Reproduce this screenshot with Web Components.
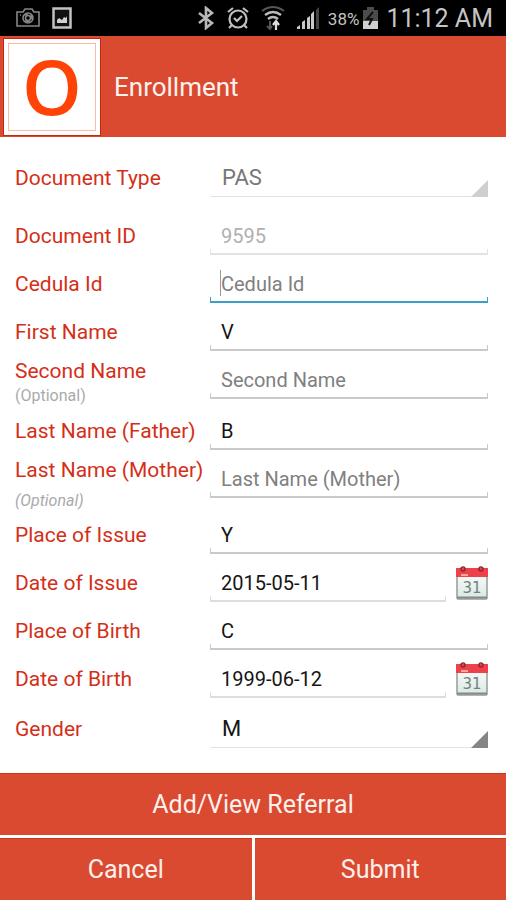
<!DOCTYPE html>
<html lang="en">
<head>
<meta charset="utf-8">
<meta name="viewport" content="width=device-width, initial-scale=1">
<title>Enrollment</title>
<style>
  body { margin: 0; background: #fff; font-family: Roboto, "Liberation Sans", sans-serif;
    --brand: #d94a31; --label: #d42f18; }
</style>
</head>
<body>
<enrollment-screen></enrollment-screen>

<script>
const attach = (host, html) => {
  const t = document.createElement('template');
  t.innerHTML = html;
  host.attachShadow({ mode: 'open' }).append(t.content.cloneNode(true));
};

customElements.define('status-bar', class extends HTMLElement {
  constructor() {
    super();
    attach(this, `
<style>
  :host { display: flex; align-items: center; justify-content: space-between; height: 36px; padding: 0 13px 0 16px; background: #000; color: #c4c4c4; box-sizing: border-box; }
  div { display: flex; align-items: center; }
  svg { display: block; flex: none; }
  .left { gap: 12px; }
  .right { gap: 8px; }
  .radios { gap: 12px; }
  .power { gap: 4px; }
  .pct { font-size: 17px; line-height: 20px; padding-top: 2px; }
  .time { font-size: 25px; line-height: 28px; padding-top: 2px; }
</style>
<div class="left">
  <svg width="24" height="20" viewBox="0 0 24 20" fill="none" stroke="#858585" stroke-width="1.6">
    <path d="M1 4h6l2-3h7l2 3h5v14H1z"/><circle cx="12" cy="10" r="5"/><circle cx="12" cy="10" r="2.5"/><path d="M8 7l4-1M15 6l1 5M14 14l-5-1M4 7h1"/>
  </svg>
  <svg width="20" height="22" viewBox="0 0 20 22"><path d="M1.5 1.5h17v19h-17z" fill="#111" stroke="#c2c2c2" stroke-width="2.5"/><path d="M5 16v-3l2-2 3 2 2-3 2 1 1-2v7z" fill="#d0d0d0"/></svg>
</div>
<div class="right">
  <div class="radios">
  <svg width="18" height="24" viewBox="0 0 18 24" fill="none" stroke="#b8b8b8" stroke-width="2.6"><path d="M2 7l13 10-6 5V2l6 5L2 17"/></svg>
  <svg width="22" height="24" viewBox="0 0 22 24" fill="none" stroke="#c0c0c0" stroke-width="2.2"><circle cx="11" cy="13" r="8.5"/><path d="M7 12l3 3 5-5M1 6l5-4M21 6l-5-4M5 19l-3 3M17 19l3 3"/></svg>
  <svg width="24" height="26" viewBox="0 0 24 26" fill="none"><path d="M1 6q11-8 22 0" stroke="#555" stroke-width="2"/><path d="M4 10q8-6 16 0M7 14q5-4 10 0" stroke="#bbb" stroke-width="2.4"/><path d="M9 16v8M6 21l3 3 2-3" stroke="#555" stroke-width="2"/><path d="M15 25v-8M12 20l3-4 3 4" stroke="#ddd" stroke-width="2.2"/></svg>
  <svg width="23" height="24" viewBox="0 0 23 24" fill="#c8c8c8"><path d="M0 23v-2l3-2v4zM5 23v-7l3-2v9zM10 23V12l3-2v13zM14 23V8l3-3v18z"/><path d="M19 23V4l3-3v22z" fill="#444"/></svg>
  </div>
  <div class="power"><span class="pct">38%</span>
  <svg width="15" height="24" viewBox="0 0 15 24"><path d="M0 4h4V1h7v3h4v19H0z" fill="#4c4c4c"/><path d="M0 15h15v8H0z" fill="#d0d0d0"/><path d="M10 6l-6 7h5l-3 6" fill="none" stroke="#111" stroke-width="2"/></svg></div>
  <span class="time">11:12 AM</span>
</div>`);
  }
});

customElements.define('app-header', class extends HTMLElement {
  constructor() {
    super();
    attach(this, `
<style>
  :host { display: flex; align-items: center; gap: 14px; height: 101px; padding: 0 4px; background: var(--brand); color: #fff2ee; box-sizing: border-box; }
  .logo { display: flex; padding: 4px; background: #fff; outline: 1px solid #c8260d; }
  .logo span { width: 86px; height: 86px; border: 1px solid #ffb9a8; color: #ff4206; font: 600 76px/84px "Open Sans", "Noto Sans", sans-serif; text-align: center; }
  h1 { margin: 0; font-size: 26px; font-weight: 400; line-height: 32px; }
</style>
<div class="logo"><span>O</span></div>
<h1><slot></slot></h1>`);
  }
});

customElements.define('calendar-icon', class extends HTMLElement {
  constructor() {
    super();
    attach(this, `
<style>:host { display: block; } svg { display: block; }</style>
<svg width="32" height="34" viewBox="0 0 32 34">
  <defs><linearGradient id="g" x2="0" y2="1"><stop stop-color="#fff"/><stop offset="1" stop-color="#d7e8e3"/></linearGradient></defs>
  <rect x="1" y="3" width="30" height="30" rx="1" fill="url(#g)" stroke="#999" stroke-width="1.5"/>
  <path d="M0 2h32v9H0z" fill="#ef4149"/><path d="M1 31.5h30" stroke="#888" stroke-width="2"/>
  <path d="M5 9h7" stroke="#ffc4c4" stroke-width="1.5"/>
  <g fill="none" stroke="#8f2930" stroke-width="1.5"><circle cx="7" cy="3" r="2"/><circle cx="25" cy="3" r="2"/></g>
  <text x="16" y="27" text-anchor="middle" font-family="DejaVu Sans" font-size="15" fill="#71837f">31</text>
</svg>`);
  }
});

customElements.define('form-row', class extends HTMLElement {
  connectedCallback() {
    if (this.shadowRoot) return;
    const a = n => this.getAttribute(n) || '';
    const kind = a('kind') || 'text';
    const control = kind === 'select'
      ? `<select id="c"><option>${a('value')}</option></select>`
      : `<input id="c" type="text" value="${a('value')}" placeholder="${a('placeholder')}"${this.hasAttribute('readonly') ? ' readonly' : ''}>`;
    attach(this, `
<style>
  :host { display: grid; grid-template-columns: 195px minmax(0, 1fr); align-items: start; padding: 0 18px 0 15px; --line: #c9c9c9; --ink: #151515; }
  :host([muted]) { --line: #e2e2e2; --ink: #b0b0b0; }
  :host([kind="select"]) { --line: #e2e2e2; }
  :host([kind="select"][muted]) { --ink: #777; }
  :host([kind="date"]) { --line: #dedede; }
  :host([active]) { --line: #3a9fcb; }
  .name { display: flex; flex-direction: column; justify-content: center; min-height: 48px; color: var(--label); font-size: 21px; line-height: 24px; white-space: nowrap; }
  :host([note]) .name { justify-content: flex-start; padding-top: 3px; gap: 3px; }
  :host([loose]) .name { gap: 9px; }
  small { font-size: 16px; line-height: 20px; color: #aaa; }
  :host([loose]) small { font-style: italic; }
  .cell { display: flex; align-items: center; gap: 10px; height: 48px; }
  .field { position: relative; flex: 1; min-width: 0; height: 38px; box-sizing: border-box; border-bottom: 2px solid var(--line); }
  .field::after { content: ""; position: absolute; inset: auto 0 0; height: 4px; border: solid var(--line); border-width: 0 1px; pointer-events: none; }
  :host([active]) .field::before { content: ""; position: absolute; left: 10px; top: 5px; width: 1px; height: 26px; background: #999; }
  input, select { display: block; width: 100%; height: 36px; margin: 0; padding: 1px 11px 0; border: 0; border-radius: 0; outline: 0; background: none; color: var(--ink); font: 20px/24px Roboto, "Liberation Sans", sans-serif; box-sizing: border-box; appearance: none; opacity: 1; }
  select { font-size: 22px; padding-left: 12px; }
  ::placeholder { color: #808080; opacity: 1; }
  :host([kind="select"]) .field::after { inset: auto 0 -1px auto; width: 17px; height: 17px; border: 0; background: #858585; clip-path: polygon(100% 0, 100% 100%, 0 100%); }
  :host([kind="select"][muted]) .field::after { background: #cfcfcf; }
  :host([kind="select"]) .field { border-bottom-width: 1px; }
  button { padding: 0; border: 0; background: none; }
</style>
<div class="name"><label for="c">${a('label')}</label>${a('note') ? `<small>${a('note')}</small>` : ''}</div>
<div class="cell"><div class="field">${control}</div>${kind === 'date' ? `<button type="button" aria-label="Pick ${a('label')}"><calendar-icon></calendar-icon></button>` : ''}</div>`);
  }
});

customElements.define('action-button', class extends HTMLElement {
  constructor() {
    super();
    attach(this, `
<style>
  :host { display: block; }
  button { display: block; width: 100%; height: 62px; padding: 0; border: 0; border-top: 1px solid #cb3517; background: var(--brand); color: #fff0ec; font: 25px/32px Roboto, "Liberation Sans", sans-serif; }
</style>
<button type="button"><slot></slot></button>`);
  }
});

customElements.define('enrollment-screen', class extends HTMLElement {
  constructor() {
    super();
    attach(this, `
<style>
  :host { display: flex; flex-direction: column; min-height: 100vh; }
  main { flex: 1; padding: 17px 0 20px; }
  .first { margin-bottom: 10px; }
  .last { margin-top: 2px; }
  footer { display: grid; grid-template-columns: 1fr 1fr; gap: 3px; background: #fff; }
  .wide { grid-column: 1 / -1; }
</style>
<status-bar></status-bar>
<app-header>Enrollment</app-header>
<main>
  <form-row class="first" kind="select" muted label="Document Type" value="PAS"></form-row>
  <form-row muted readonly label="Document ID" value="9595"></form-row>
  <form-row active label="Cedula Id" placeholder="Cedula Id"></form-row>
  <form-row label="First Name" value="V"></form-row>
  <form-row label="Second Name" note="(Optional)" placeholder="Second Name"></form-row>
  <form-row label="Last Name (Father)" value="B"></form-row>
  <form-row loose label="Last Name (Mother)" note="(Optional)" placeholder="Last Name (Mother)"></form-row>
  <form-row label="Place of Issue" value="Y"></form-row>
  <form-row kind="date" label="Date of Issue" value="2015-05-11"></form-row>
  <form-row label="Place of Birth" value="C"></form-row>
  <form-row kind="date" label="Date of Birth" value="1999-06-12"></form-row>
  <form-row class="last" kind="select" label="Gender" value="M"></form-row>
</main>
<footer>
  <action-button class="wide">Add/View Referral</action-button>
  <action-button>Cancel</action-button>
  <action-button>Submit</action-button>
</footer>`);
  }
});
</script>
</body>
</html>
